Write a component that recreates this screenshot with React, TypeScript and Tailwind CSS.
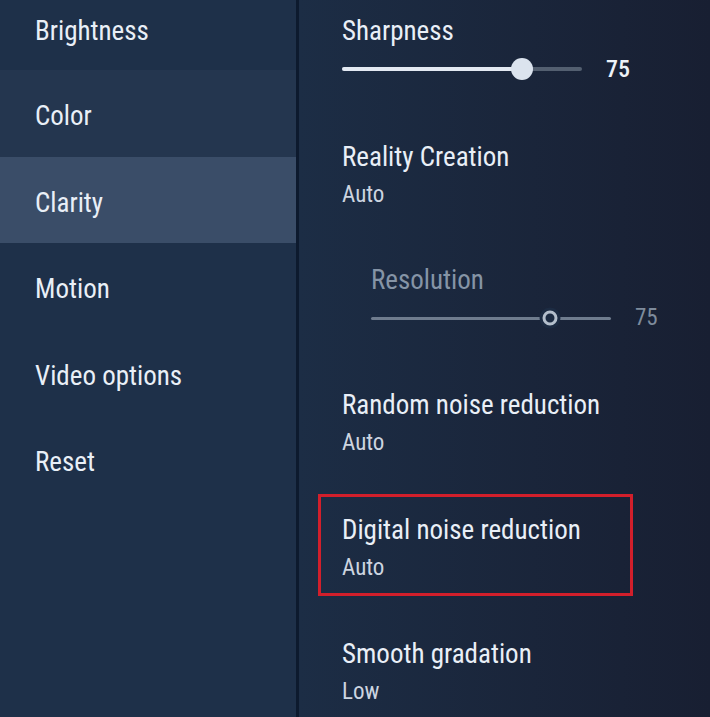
import React from 'react';

// Picture settings menu (TV style)
const menuItems = ['Brightness', 'Color', 'Clarity', 'Motion', 'Video options', 'Reset'];

const fontStack = { fontFamily: '"Roboto Condensed", "Liberation Sans Narrow", Roboto, sans-serif' };

function MenuRow({ label, index }: { label: string; index: number }) {
  const bg =
    index === 2 ? 'bg-[#3a4d68]' : index === 1 ? 'bg-[#24364f]' : 'bg-transparent';
  const height = index === 0 ? 'h-[70px] pb-[9px]' : 'h-[86.5px] pt-[6px]';
  return (
    <div className={`${bg} ${height} flex items-center pl-[35px]`}>
      <span className="text-[27px] leading-[34px] font-normal text-[#e9eff7] [font-stretch:condensed]">
        {label}
      </span>
    </div>
  );
}

function Slider({ value, disabled = false }: { value: number; disabled?: boolean }) {
  const pct = value;
  if (disabled) {
    return (
      <div className="flex items-center h-[24px]">
        <div className="relative w-[240px] h-[3px] bg-[#6f7c8e] rounded-full">
          <div
            className="absolute top-1/2 -translate-x-1/2 -translate-y-1/2 w-[15px] h-[15px] rounded-full border-[3px] border-[#b4bfcc] bg-[#1c2b42] shadow-[0_0_0_3px_#1c2b42]"
            style={{ left: `${(pct / 100) * 240 - 1}px` }}
          />
        </div>
        <span className="ml-[24px] text-[23px] leading-[24px] text-[#7e8b9c] [font-stretch:condensed]">{value}</span>
      </div>
    );
  }
  return (
    <div className="flex items-center h-[24px]">
      <div className="relative w-[240px] h-[4px] bg-[#535f70] rounded-full">
        <div className="absolute left-0 top-0 h-full bg-[#e3e9f2] rounded-full" style={{ width: `${pct}%` }} />
        <div
          className="absolute top-1/2 -translate-x-1/2 -translate-y-1/2 w-[22px] h-[22px] rounded-full bg-[#dbe3ee]"
          style={{ left: `${pct}%` }}
        />
      </div>
      <span className="ml-[24px] text-[24px] leading-[24px] font-medium text-[#edf2f8] [font-stretch:condensed]">{value}</span>
    </div>
  );
}

function Setting({ title, value, className = '' }: { title: string; value: string; className?: string }) {
  return (
    <div className={className}>
      <div className="text-[27px] leading-[34px] font-normal text-[#e9eff7] [font-stretch:condensed]">{title}</div>
      <div className="text-[23px] leading-[38px] pt-[2px] text-[#cdd5e0] [font-stretch:condensed]">{value}</div>
    </div>
  );
}

export default function App() {
  return (
    <div className="w-[710px] h-[717px] overflow-hidden flex bg-[#1b2b43]" style={fontStack}>
      {/* Left menu */}
      <div className="w-[296px] shrink-0 bg-[#1e3049] flex flex-col">
        {menuItems.map((item, i) => (
          <MenuRow key={item} label={item} index={i} />
        ))}
      </div>
      <div className="w-[3px] shrink-0 bg-[#0d1a2e]" />

      {/* Right settings */}
      <div className="flex-1 bg-gradient-to-r from-[#1c2d45] to-[#181f32] pl-[43px] pt-[14px]">
        <div className="text-[27px] leading-[34px] font-normal text-[#e9eff7] [font-stretch:condensed]">Sharpness</div>
        <div className="mt-[9px]">
          <Slider value={75} />
        </div>

        <Setting title="Reality Creation" value="Auto" className="mt-[59px]" />

        <div className="pl-[29px] mt-[49px]">
          <div className="text-[27px] leading-[34px] text-[#8594a6] [font-stretch:condensed]">Resolution</div>
          <div className="mt-[9px]">
            <Slider value={75} disabled />
          </div>
        </div>

        <Setting title="Random noise reduction" value="Auto" className="mt-[58px]" />

        <div className="mt-[32px] -ml-[24px] w-[315px] border-[3px] border-[#d21f2b] pl-[21px] pt-[16px] pb-[6px]">
          <Setting title="Digital noise reduction" value="Auto" />
        </div>

        <Setting title="Smooth gradation" value="Low" className="mt-[41px]" />
      </div>
    </div>
  );
}
